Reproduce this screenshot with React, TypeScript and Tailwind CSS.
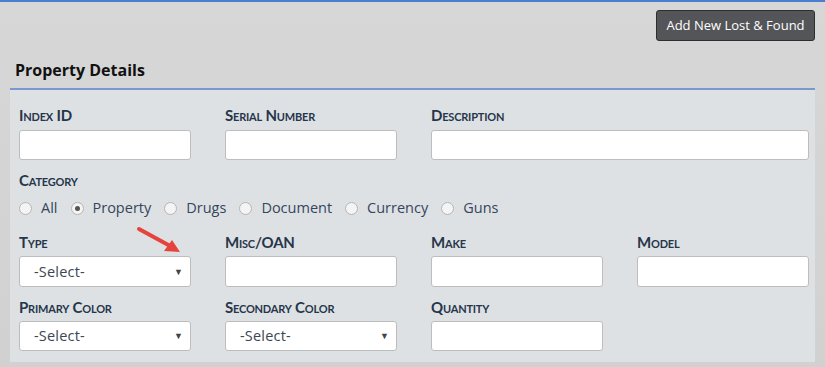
import React from "react";

const font = { fontFamily: '"Open Sans", "Liberation Sans", sans-serif' };

function Label({ children }: { children: React.ReactNode }) {
  return (
    <div className="h-5 font-['Lato','Liberation_Sans',sans-serif] text-[15px] leading-5 font-bold text-[#26364a] [font-variant:small-caps] tracking-[-0.2px]">
      {children}
    </div>
  );
}

function TextBox() {
  return <div className="h-full w-full rounded-[3px] border border-[#bdbdbd] bg-white" />;
}

function SelectBox() {
  return (
    <div className="flex h-full w-full items-center justify-between rounded-[3px] border border-[#bdbdbd] bg-white pl-[14px] pr-[7px]">
      <span className="text-[14.5px] tracking-[0.2px] text-[#3c4652]">-Select-</span>
      <span className="text-[9px] text-[#444]">▼</span>
    </div>
  );
}

function Radio({ label, checked }: { label: string; checked?: boolean }) {
  return (
    <div className="flex items-center">
      <span className="flex h-[13px] w-[13px] items-center justify-center rounded-full border border-[#b5b5b5] bg-[#f4f4f4]">
        {checked && <span className="h-[5px] w-[5px] rounded-full bg-[#555]" />}
      </span>
      <span className="ml-[9px] mr-[13px] text-[14.5px] text-[#34465c]">{label}</span>
    </div>
  );
}

export default function App() {
  const categories = ["All", "Property", "Drugs", "Document", "Currency", "Guns"];

  return (
    <div className="relative h-[367px] w-[825px] overflow-hidden border-t-2 border-[#4a7fd0] bg-gradient-to-b from-[#d7d7d7] to-[#d1d1d1]" style={font}>
      <div className="flex justify-end pr-[10px] pt-[8px]">
        <button className="h-[31px] w-[159px] rounded-[3px] border border-[#2e2e2e] bg-[#545558] text-[13px] text-white">
          Add New Lost &amp; Found
        </button>
      </div>

      <div className="mt-[19px] pl-[15px] text-[16px] font-bold leading-5 text-[#111]">Property Details</div>

      <div className="ml-[10px] mr-[10px] mt-[8px] border-t-2 border-[#7b97cf] bg-[#dee1e4] pl-[9px] pb-[11px] pt-[15px]">
        <div className="grid grid-cols-[172px_172px_378px] gap-x-[34px]">
          <Label>Index ID</Label>
          <Label>Serial Number</Label>
          <Label>Description</Label>
          <div className="mt-[5px] h-[30px]"><TextBox /></div>
          <div className="mt-[5px] h-[30px]"><TextBox /></div>
          <div className="mt-[5px] h-[30px]"><TextBox /></div>
        </div>

        <div className="mt-[10px]"><Label>Category</Label></div>
        <div className="mt-[8px] flex h-5 items-center">
          {categories.map((c) => (
            <Radio key={c} label={c} checked={c === "Property"} />
          ))}
        </div>

        <div className="mt-[14px] grid grid-cols-[172px_172px_172px_172px] gap-x-[34px]">
          <Label>Type</Label>
          <Label>Misc/OAN</Label>
          <Label>Make</Label>
          <Label>Model</Label>
          <div className="mt-[4px] h-[31px]"><SelectBox /></div>
          <div className="mt-[4px] h-[31px]"><TextBox /></div>
          <div className="mt-[4px] h-[31px]"><TextBox /></div>
          <div className="mt-[4px] h-[31px]"><TextBox /></div>
        </div>

        <div className="mt-[10px] grid grid-cols-[172px_172px_172px_172px] gap-x-[34px]">
          <Label>Primary Color</Label>
          <Label>Secondary Color</Label>
          <Label>Quantity</Label>
          <div />
          <div className="mt-[4px] h-[30px]"><SelectBox /></div>
          <div className="mt-[4px] h-[30px]"><SelectBox /></div>
          <div className="mt-[4px] h-[30px]"><TextBox /></div>
          <div />
        </div>
      </div>

      {/* annotation arrow */}
      <svg className="absolute left-[134px] top-[222px]" width="52" height="34" viewBox="0 0 52 34">
        <line x1="5" y1="5" x2="38" y2="23" stroke="#e5433b" strokeWidth="4" strokeLinecap="round" />
        <polygon points="46,28 30,27 38,16" fill="#e5433b" />
      </svg>
    </div>
  );
}
